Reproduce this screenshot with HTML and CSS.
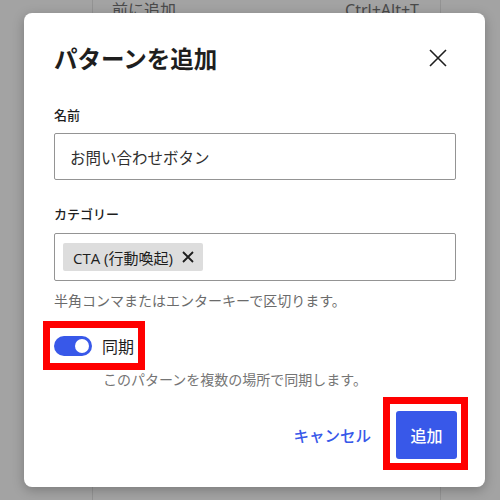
FILE: index.html
```html
<!DOCTYPE html>
<html lang="ja">
<head>
<meta charset="utf-8">
<title>パターンを追加</title>
<link rel="stylesheet" href="styles.css">
</head>
<body>
  <div class="backdrop">
    <div class="menu">
      <div class="menu-item"><span>前に追加</span><span class="shortcut">Ctrl+Alt+T</span></div>
    </div>
  </div>

  <div class="modal" role="dialog" aria-labelledby="modal-title">
    <header class="modal-header">
      <h1 id="modal-title" class="modal-title">パターンを追加</h1>
      <button class="close-btn" aria-label="閉じる">
        <svg width="20" height="20" viewBox="0 0 20 20"><path d="M2 2 L18 18 M18 2 L2 18" stroke="#1e1e1e" stroke-width="1.6" fill="none"/></svg>
      </button>
    </header>

    <div class="modal-body">
      <label class="field-label">名前</label>
      <div class="text-input">お問い合わせボタン</div>

      <label class="field-label cat-label">カテゴリー</label>
      <div class="token-input">
        <span class="token">CTA (行動喚起)
          <svg class="token-x" width="12" height="12" viewBox="0 0 12 12"><path d="M1 1 L11 11 M11 1 L1 11" stroke="#1e1e1e" stroke-width="1.8" fill="none"/></svg>
        </span>
      </div>
      <p class="help">半角コンマまたはエンターキーで区切ります。</p>

      <div class="toggle-row">
        <span class="toggle"><span class="knob"></span></span>
        <span class="toggle-label">同期</span>
      </div>
      <p class="help toggle-help">このパターンを複数の場所で同期します。</p>
    </div>

    <footer class="modal-footer">
      <button class="btn-link">キャンセル</button>
      <button class="btn-primary">追加</button>
    </footer>
  </div>

  <div class="highlight highlight-toggle"></div>
  <div class="highlight highlight-submit"></div>
</body>
</html>
```

FILE: styles.css
```css
* { box-sizing: border-box; }

html, body {
  margin: 0;
  width: 500px;
  height: 500px;
  overflow: hidden;
}

body {
  background: #a3a3a3;
  font-family: "Noto Sans", "Noto Sans CJK JP", sans-serif;
  color: #1e1e1e;
  position: relative;
}

/* dimmed page behind the dialog */
.backdrop {
  height: 100%;
  padding-left: 92px;
}

.menu {
  width: 349px;
  height: 100%;
  border-left: 1px solid #939393;
  border-right: 1px solid #939393;
}

.menu-item {
  display: flex;
  justify-content: space-between;
  padding: 0 21px 0 19px;
  font-size: 16px;
  line-height: 20px;
  color: #4a4a4a;
}

/* dialog */
.modal {
  position: absolute;
  left: 24px;
  top: 13px;
  width: 461px;
  height: 474px;
  background: #fff;
  border-radius: 8px;
  box-shadow: 0 3px 12px rgba(0, 0, 0, 0.25);
  display: flex;
  flex-direction: column;
}

.modal-header {
  display: flex;
  align-items: center;
  justify-content: space-between;
  padding: 32px 37px 0 30px;
}

.modal-title {
  margin: 0;
  font-family: "Noto Sans CJK JP", sans-serif;
  font-size: 23.5px;
  line-height: 26px;
  font-weight: 700;
  color: #1e1e1e;
}

.close-btn {
  border: 0;
  background: none;
  padding: 0;
  width: 20px;
  height: 20px;
  display: flex;
}

.modal-body {
  padding: 35px 29px 0 30px;
  display: flex;
  flex-direction: column;
  font-family: "Noto Sans CJK JP", sans-serif;
}

.field-label {
  font-size: 13px;
  line-height: 18px;
  font-weight: 500;
  color: #1e1e1e;
  margin-bottom: 9px;
}

.cat-label {
  margin-top: 25px;
  margin-bottom: 10px;
}

.text-input {
  height: 47px;
  border: 1px solid #949494;
  border-radius: 2px;
  padding: 0 15px;
  display: flex;
  align-items: center;
  font-size: 15.5px;
  color: #2f2f2f;
}

.token-input {
  height: 48px;
  border: 1px solid #949494;
  border-radius: 2px;
  padding: 9px 8px;
  display: flex;
  align-items: flex-start;
}

.token {
  height: 28px;
  background: #dddddd;
  border-radius: 2px;
  padding: 0 9px 0 10px;
  display: flex;
  align-items: center;
  gap: 9px;
  font-family: "Open Sans", "Noto Sans CJK JP", sans-serif;
  font-size: 15px;
  color: #1e1e1e;
}

.token-x { display: block; }

.help {
  margin: 9px 0 0;
  font-size: 14px;
  line-height: 20px;
  color: #6b6b6b;
}

.toggle-row {
  margin-top: 26px;
  display: flex;
  align-items: center;
  gap: 10px;
  height: 20px;
}

.toggle {
  width: 38px;
  height: 20px;
  border-radius: 10px;
  background: #3858e9;
  display: flex;
  align-items: center;
  justify-content: flex-end;
  padding-right: 3px;
}

.knob {
  width: 14px;
  height: 14px;
  border-radius: 50%;
  background: #fff;
}

.toggle-label {
  font-size: 16px;
  color: #1e1e1e;
}

.toggle-help {
  margin-top: 13px;
  padding-left: 49px;
  color: #757575;
}

.modal-footer {
  margin-top: auto;
  padding: 0 28px 28px 0;
  display: flex;
  justify-content: flex-end;
  align-items: center;
  gap: 25px;
  font-family: "Noto Sans CJK JP", sans-serif;
}

.btn-link {
  border: 0;
  background: none;
  padding: 0;
  font-family: inherit;
  font-size: 15.5px;
  font-weight: 500;
  color: #3858e9;
}

.btn-primary {
  border: 0;
  width: 61px;
  height: 48px;
  border-radius: 3px;
  background: #3858e9;
  color: #fff;
  font-family: inherit;
  font-size: 16px;
  font-weight: 500;
}

/* red callouts drawn over the dialog */
.highlight {
  position: absolute;
  border: 7px solid #ff0000;
}

.highlight-toggle {
  left: 43px;
  top: 321px;
  width: 102px;
  height: 49px;
}

.highlight-submit {
  left: 383px;
  top: 397px;
  width: 85px;
  height: 73px;
}
```
